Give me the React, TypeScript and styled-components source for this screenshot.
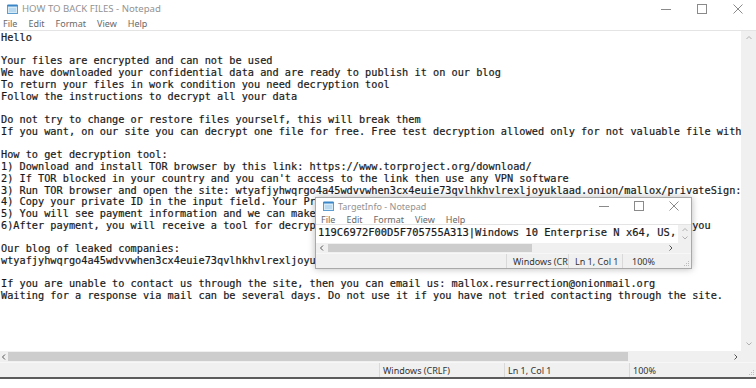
import React from "react";
import styled, { createGlobalStyle } from "styled-components";

const ui = `"Noto Sans", "Open Sans", "Liberation Sans", sans-serif`;
const mono = `"DejaVu Sans Mono", "Liberation Mono", monospace`;

const GlobalStyle = createGlobalStyle`
  html, body {
    margin: 0;
    padding: 0;
    background: #fff;
  }
  body {
    width: 756px;
    height: 388px;
    overflow: hidden;
  }
`;

const Screen = styled.div`
  position: relative;
  width: 756px;
  height: 388px;
  background: #fff;
  overflow: hidden;
`;

const Window = styled.div`
  display: flex;
  flex-direction: column;
  height: 379px;
  box-sizing: border-box;
  border-bottom: 2px solid #5c5c5c;
`;

const Popup = styled.div`
  position: absolute;
  left: 315px;
  top: 197px;
  width: 377px;
  height: 72px;
  box-sizing: border-box;
  display: flex;
  flex-direction: column;
  background: #fff;
  border: 1px solid #a9a9a9;
  box-shadow: 0 0 7px rgba(0, 0, 0, 0.28);
`;

const TitleBar = styled.div<{ $h: number }>`
  display: flex;
  align-items: center;
  flex: none;
  height: ${(p) => p.$h}px;
  padding-left: 7px;
`;

const TitleText = styled.span<{ $size: number }>`
  margin-left: 4px;
  font: ${(p) => p.$size}px ${ui};
  color: #939393;
  white-space: nowrap;
`;

const Controls = styled.div`
  margin-left: auto;
  display: flex;
  align-self: stretch;
`;

const ControlButton = styled.span<{ $w: number }>`
  width: ${(p) => p.$w}px;
  display: flex;
  align-items: center;
  justify-content: center;
`;

const MenuBar = styled.div<{ $h: number; $pad: number }>`
  display: flex;
  align-items: center;
  flex: none;
  height: ${(p) => p.$h}px;
  padding-left: ${(p) => p.$pad}px;
  gap: 11px;
  border-bottom: 1px solid #e4e4e4;
  font: 9px ${ui};
  color: #6a6a6a;
`;

const MenuItem = styled.span`
  white-space: nowrap;
`;

const EditorRow = styled.div`
  display: flex;
  flex: 1;
  min-height: 0;
`;

const TextArea = styled.pre<{ $size: number; $lh: number; $pt: number; $pl: number }>`
  flex: 1;
  min-width: 0;
  margin: 0;
  overflow: hidden;
  white-space: pre;
  font-family: ${mono};
  font-size: ${(p) => p.$size}px;
  line-height: ${(p) => p.$lh}px;
  padding: ${(p) => p.$pt}px 0 0 ${(p) => p.$pl}px;
  color: #141414;
  -webkit-text-stroke: 0.2px #2a2a2a;
`;

const VScroll = styled.div<{ $w: number; $pad: number }>`
  flex: none;
  width: ${(p) => p.$w}px;
  background: #f0f0f0;
  display: flex;
  flex-direction: column;
  justify-content: space-between;
  align-items: center;
  padding: ${(p) => p.$pad}px 0;
  box-sizing: border-box;
`;

const HScroll = styled.div<{ $h: number }>`
  display: flex;
  align-items: center;
  flex: none;
  height: ${(p) => p.$h}px;
  background: #f0f0f0;
`;

const ArrowCell = styled.span<{ $w: number }>`
  flex: none;
  width: ${(p) => p.$w}px;
  display: flex;
  align-items: center;
  justify-content: center;
`;

const Track = styled.div`
  flex: 1;
  display: flex;
  align-items: center;
  align-self: stretch;
`;

const Thumb = styled.div<{ $w: number; $h: number }>`
  width: ${(p) => p.$w}px;
  height: ${(p) => p.$h}px;
  background: #cdcdcd;
`;

const Corner = styled.span<{ $w: number }>`
  flex: none;
  width: ${(p) => p.$w}px;
  align-self: stretch;
  background: #f0f0f0;
`;

const StatusBar = styled.div<{ $h: number }>`
  display: flex;
  flex: none;
  height: ${(p) => p.$h}px;
  background: #f0f0f0;
  border-top: 1px solid #f7f7f7;
  font: 9px ${ui};
  color: #333;
`;

const StatusSpacer = styled.div`
  flex: 1;
`;

const StatusCell = styled.div<{ $w: number; $pad: number }>`
  flex: none;
  width: ${(p) => p.$w}px;
  box-sizing: border-box;
  border-left: 1px solid #d9d9d9;
  padding-left: ${(p) => p.$pad}px;
  display: flex;
  align-items: center;
  white-space: nowrap;
  overflow: hidden;
`;

const Grip = styled.div<{ $w: number }>`
  flex: none;
  width: ${(p) => p.$w}px;
  display: flex;
  align-items: flex-end;
  justify-content: flex-end;
  padding: 0 1px 1px 0;
  box-sizing: border-box;
`;

const NotepadIcon = () => (
  <svg width="11" height="10" viewBox="0 0 11 10">
    <rect x="0.5" y="1.5" width="10" height="8" fill="#d6ebf8" stroke="#5d9dcf" />
    <rect x="0.5" y="0.5" width="10" height="2" fill="#3a86c6" />
    <path d="M2 5h7M2 7h7" stroke="#8dbde2" strokeWidth="0.8" />
  </svg>
);

const Minimize = () => (
  <svg width="10" height="10" viewBox="0 0 10 10">
    <path d="M0 5.5h10" stroke="#8a8a8a" strokeWidth="1" />
  </svg>
);

const Maximize = () => (
  <svg width="10" height="10" viewBox="0 0 10 10">
    <rect x="0.5" y="0.5" width="9" height="9" fill="none" stroke="#8a8a8a" />
  </svg>
);

const Close = () => (
  <svg width="10" height="10" viewBox="0 0 10 10">
    <path d="M0.5 0.5l9 9M9.5 0.5l-9 9" stroke="#8a8a8a" strokeWidth="1" />
  </svg>
);

const Chevron = ({ dir }: { dir: "up" | "down" | "left" | "right" }) => {
  const d = {
    up: "M0.5 4L3 1.5L5.5 4",
    down: "M0.5 1.5L3 4L5.5 1.5",
    left: "M4 0.5L1.5 3L4 5.5",
    right: "M1.5 0.5L4 3L1.5 5.5",
  }[dir];
  return (
    <svg width="6" height="6" viewBox="0 0 6 6">
      <path d={d} fill="none" stroke={dir === "up" || dir === "down" ? "#b0b0b0" : "#555"} strokeWidth="1" />
    </svg>
  );
};

const GripDots = () => (
  <svg width="7" height="7" viewBox="0 0 7 7" fill="#bdbdbd">
    <rect x="5" y="1" width="1" height="1" />
    <rect x="3" y="3" width="1" height="1" />
    <rect x="5" y="3" width="1" height="1" />
    <rect x="1" y="5" width="1" height="1" />
    <rect x="3" y="5" width="1" height="1" />
    <rect x="5" y="5" width="1" height="1" />
  </svg>
);

const menu = ["File", "Edit", "Format", "View", "Help"];

const noteLines = [
  "Hello",
  "",
  "Your files are encrypted and can not be used",
  "We have downloaded your confidential data and are ready to publish it on our blog",
  "To return your files in work condition you need decryption tool",
  "Follow the instructions to decrypt all your data",
  "",
  "Do not try to change or restore files yourself, this will break them",
  "If you want, on our site you can decrypt one file for free. Free test decryption allowed only for not valuable file with size less than 3MB",
  "",
  "How to get decryption tool:",
  "1) Download and install TOR browser by this link: https://www.torproject.org/download/",
  "2) If TOR blocked in your country and you can't access to the link then use any VPN software",
  "3) Run TOR browser and open the site: wtyafjyhwqrgo4a45wdvvwhen3cx4euie73qvlhkhvlrexljoyuklaad.onion/mallox/privateSign:",
  "4) Copy your private ID in the input field. Your Private key: TargetInfo.txt",
  "5) You will see payment information and we can make free test decryption here",
  "6)After payment, you will receive a tool for decryption of your files, and then we will delete your data. Thank you",
  "",
  "Our blog of leaked companies:",
  "wtyafjyhwqrgo4a45wdvvwhen3cx4euie73qvlhkhvlrexljoyuklaad.onion/",
  "",
  "If you are unable to contact us through the site, then you can email us: mallox.resurrection@onionmail.org",
  "Waiting for a response via mail can be several days. Do not use it if you have not tried contacting through the site.",
];

function WindowControls({ w }: { w: number }) {
  return (
    <Controls>
      <ControlButton $w={w}>
        <Minimize />
      </ControlButton>
      <ControlButton $w={w}>
        <Maximize />
      </ControlButton>
      <ControlButton $w={w}>
        <Close />
      </ControlButton>
    </Controls>
  );
}

export default function App() {
  return (
    <Screen>
      <GlobalStyle />
      <Window>
        <TitleBar $h={17}>
          <NotepadIcon />
          <TitleText $size={9.6}>HOW TO BACK FILES - Notepad</TitleText>
          <WindowControls w={36} />
        </TitleBar>
        <MenuBar $h={13} $pad={3}>
          {menu.map((m) => (
            <MenuItem key={m}>{m}</MenuItem>
          ))}
        </MenuBar>
        <EditorRow>
          <TextArea $size={10.25} $lh={11.73} $pt={1} $pl={1}>
            {noteLines.join("\n")}
          </TextArea>
          <VScroll $w={15} $pad={4}>
            <Chevron dir="up" />
            <Chevron dir="down" />
          </VScroll>
        </EditorRow>
        <HScroll $h={11}>
          <ArrowCell $w={8}>
            <Chevron dir="left" />
          </ArrowCell>
          <Track>
            <Thumb $w={620} $h={9} />
          </Track>
          <ArrowCell $w={11}>
            <Chevron dir="right" />
          </ArrowCell>
          <Corner $w={15} />
        </HScroll>
        <StatusBar $h={14}>
          <StatusSpacer />
          <StatusCell $w={125} $pad={3}>Windows (CRLF)</StatusCell>
          <StatusCell $w={125} $pad={3}>Ln 1, Col 1</StatusCell>
          <StatusCell $w={112} $pad={3}>100%</StatusCell>
          <Grip $w={15}>
            <GripDots />
          </Grip>
        </StatusBar>
      </Window>

      <Popup>
        <TitleBar $h={16}>
          <NotepadIcon />
          <TitleText $size={9}>TargetInfo - Notepad</TitleText>
          <WindowControls w={35} />
        </TitleBar>
        <MenuBar $h={10} $pad={5}>
          {menu.map((m) => (
            <MenuItem key={m}>{m}</MenuItem>
          ))}
        </MenuBar>
        <EditorRow>
          <TextArea $size={10.45} $lh={12} $pt={1} $pl={2}>
            119C6972F00D5F705755A313|Windows 10 Enterprise N x64, US, 4 CPU, 8 GB RAM
          </TextArea>
          <VScroll $w={13} $pad={2}>
            <Chevron dir="up" />
            <Chevron dir="down" />
          </VScroll>
        </EditorRow>
        <HScroll $h={10}>
          <ArrowCell $w={12}>
            <Chevron dir="left" />
          </ArrowCell>
          <Track>
            <Thumb $w={204} $h={8} />
          </Track>
          <ArrowCell $w={14}>
            <Chevron dir="right" />
          </ArrowCell>
          <Corner $w={13} />
        </HScroll>
        <StatusBar $h={14}>
          <StatusSpacer />
          <StatusCell $w={62} $pad={6}>Windows (CRLF)</StatusCell>
          <StatusCell $w={54} $pad={6}>Ln 1, Col 1</StatusCell>
          <StatusCell $w={56} $pad={9}>100%</StatusCell>
          <Grip $w={13}>
            <GripDots />
          </Grip>
        </StatusBar>
      </Popup>
    </Screen>
  );
}
